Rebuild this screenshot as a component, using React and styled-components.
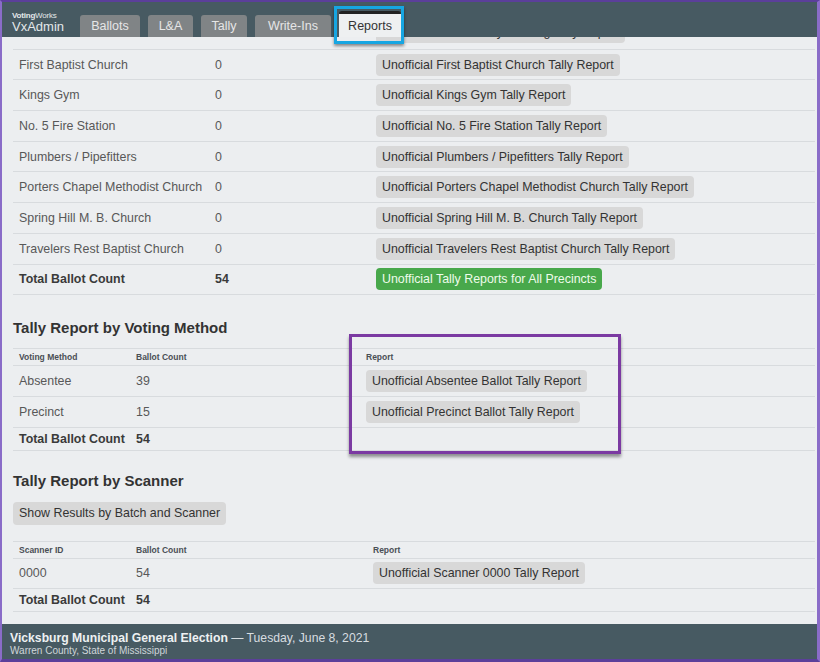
import React from "react";
import styled, { createGlobalStyle } from "styled-components";

const GlobalStyle = createGlobalStyle`
  html, body {
    margin: 0;
    padding: 0;
    height: 100%;
    overflow: hidden;
  }
  body {
    font-family: "Liberation Sans", Arial, sans-serif;
    background: #eceef0;
  }
  * { box-sizing: border-box; }
`;

const Frame = styled.div`
  height: 100vh;
  display: flex;
  flex-direction: column;
  border-style: solid;
  border-color: #8a6cc8;
  border-top-color: #5b3f9a;
  border-bottom-color: #5b3f9a;
  border-width: 2px 3px 3px 2px;
  background: #eceef0;
`;

const Header = styled.header`
  height: 35px;
  flex: none;
  display: flex;
  align-items: flex-end;
  background: #475a62;
  padding-left: 10px;
  position: relative;
  z-index: 2;
`;

const Brand = styled.div`
  align-self: center;
  color: #e4e8ea;
  width: 68px;
  margin-top: 5px;
`;

const BrandSmall = styled.div`
  font-size: 8px;
  line-height: 9px;
  letter-spacing: -0.2px;
  b { font-weight: 700; }
`;

const BrandName = styled.div`
  font-size: 13px;
  line-height: 14px;
`;

const Tabs = styled.nav`
  display: flex;
  align-items: flex-end;
  gap: 8px;
`;

const Tab = styled.div`
  position: relative;
  width: ${(p) => p.$w}px;
  height: ${(p) => (p.$active ? "26px" : "22px")};
  display: flex;
  align-items: center;
  justify-content: center;
  font-size: 12.5px;
  border-radius: 3px 3px 0 0;
  background: ${(p) => (p.$active ? "#eef0f1" : "#808486")};
  color: ${(p) => (p.$active ? "#333" : "#e6e6e6")};
  border-top: ${(p) => (p.$active ? "3px solid #222" : "none")};
`;

const TabHighlight = styled.span`
  position: absolute;
  left: -5px;
  right: -3px;
  top: -8px;
  bottom: -7px;
  border: 3px solid #16a6e2;
  box-shadow: 0 2px 3px rgba(0, 0, 0, 0.45);
  pointer-events: none;
`;

const Main = styled.main`
  flex: 1;
  overflow: hidden;
  padding: 0 2px 0 11px;
  color: #555;
`;

const Scrolled = styled.div`
  margin-top: -18px;
`;

const Grid = styled.div`
  display: grid;
  grid-template-columns: ${(p) => p.$cols};
`;

const Cell = styled.div`
  height: ${(p) => (p.$short ? "23px" : "30.7px")};
  border-bottom: 1px solid #d8dbde;
  padding-left: 6px;
  display: flex;
  align-items: ${(p) => (p.$peek ? "flex-start" : "center")};
  padding-top: ${(p) => (p.$peek ? "2px" : "0")};
  font-size: 12.4px;
  font-weight: ${(p) => (p.$bold ? 700 : 400)};
  color: ${(p) => (p.$bold ? "#3a3a3a" : "#585858")};
  white-space: nowrap;
`;

const HeadCell = styled.div`
  height: 18px;
  border-top: 1px solid #d8dbde;
  border-bottom: 1px solid #d8dbde;
  padding-left: 6px;
  display: flex;
  align-items: center;
  font-size: 8.5px;
  font-weight: 700;
  color: #4a4f55;
`;

const Button = styled.button`
  font-family: "Liberation Sans", Arial, sans-serif;
  font-size: 12.4px;
  height: 22px;
  padding: 0 6px;
  border: none;
  border-radius: 4px;
  background: ${(p) => (p.$primary ? "#48a84b" : "#d8d8d8")};
  color: ${(p) => (p.$primary ? "#eefbea" : "#333")};
  white-space: nowrap;
  cursor: pointer;
`;

const Section = styled.section`
  position: relative;
  margin-top: ${(p) => p.$top || 0}px;
`;

const Heading = styled.h2`
  margin: 0 0 11px;
  font-size: 15px;
  font-weight: 700;
  color: #333;
  line-height: 18px;
`;

const SectionButton = styled(Button)`
  height: 23px;
  margin: 1px 0 16px;
`;

const CalloutBox = styled.span`
  position: absolute;
  left: 336px;
  top: 15px;
  width: 272px;
  height: 120px;
  border: 3px solid #7b3aa2;
  box-shadow: 0 3px 3px rgba(0, 0, 0, 0.4);
  pointer-events: none;
`;

const Footer = styled.footer`
  height: 35px;
  flex: none;
  background: #475a62;
  color: #eef1f2;
  padding: 7px 8px 0;
`;

const FooterTitle = styled.div`
  font-size: 12.2px;
  line-height: 14px;
  b { font-weight: 700; }
  span { color: #d7dde0; }
`;

const FooterSub = styled.div`
  font-size: 10px;
  line-height: 12px;
  color: #cfd6d9;
`;

const precincts = [
  ["First Baptist Church", "0"],
  ["Kings Gym", "0"],
  ["No. 5 Fire Station", "0"],
  ["Plumbers / Pipefitters", "0"],
  ["Porters Chapel Methodist Church", "0"],
  ["Spring Hill M. B. Church", "0"],
  ["Travelers Rest Baptist Church", "0"],
];

const tabs = [
  ["Ballots", 60],
  ["L&A", 45],
  ["Tally", 46],
  ["Write-Ins", 76],
];

export default function App() {
  return (
    <>
      <GlobalStyle />
      <Frame>
        <Header>
          <Brand>
            <BrandSmall>
              <b>Voting</b>Works
            </BrandSmall>
            <BrandName>VxAdmin</BrandName>
          </Brand>
          <Tabs>
            {tabs.map(([label, w]) => (
              <Tab key={label} $w={w}>
                {label}
              </Tab>
            ))}
            <Tab $active $w={62}>
              Reports
              <TabHighlight />
            </Tab>
          </Tabs>
        </Header>

        <Main>
          <Scrolled>
            <Grid $cols="196px 161px 1fr">
              {/* row scrolled mostly out of view under the header */}
              <Cell $peek />
              <Cell $peek />
              <Cell $peek>
                <Button>Unofficial Fisher Ferry Building Tally Report</Button>
              </Cell>
              {precincts.map(([name, count]) => (
                <React.Fragment key={name}>
                  <Cell>{name}</Cell>
                  <Cell>{count}</Cell>
                  <Cell>
                    <Button>Unofficial {name} Tally Report</Button>
                  </Cell>
                </React.Fragment>
              ))}
              <Cell $bold>Total Ballot Count</Cell>
              <Cell $bold>54</Cell>
              <Cell>
                <Button $primary>Unofficial Tally Reports for All Precincts</Button>
              </Cell>
            </Grid>

            <Section $top={24}>
              <Heading>Tally Report by Voting Method</Heading>
              <Grid $cols="117px 230px 1fr">
                <HeadCell>Voting Method</HeadCell>
                <HeadCell>Ballot Count</HeadCell>
                <HeadCell>Report</HeadCell>
                <Cell>Absentee</Cell>
                <Cell>39</Cell>
                <Cell>
                  <Button>Unofficial Absentee Ballot Tally Report</Button>
                </Cell>
                <Cell>Precinct</Cell>
                <Cell>15</Cell>
                <Cell>
                  <Button>Unofficial Precinct Ballot Tally Report</Button>
                </Cell>
                <Cell $bold $short>Total Ballot Count</Cell>
                <Cell $bold $short>54</Cell>
                <Cell $short />
              </Grid>
              <CalloutBox />
            </Section>

            <Section $top={21}>
              <Heading>Tally Report by Scanner</Heading>
              <SectionButton>Show Results by Batch and Scanner</SectionButton>
              <Grid $cols="117px 237px 1fr">
                <HeadCell>Scanner ID</HeadCell>
                <HeadCell>Ballot Count</HeadCell>
                <HeadCell>Report</HeadCell>
                <Cell>0000</Cell>
                <Cell>54</Cell>
                <Cell>
                  <Button>Unofficial Scanner 0000 Tally Report</Button>
                </Cell>
                <Cell $bold $short>Total Ballot Count</Cell>
                <Cell $bold $short>54</Cell>
                <Cell $short />
              </Grid>
            </Section>
          </Scrolled>
        </Main>

        <Footer>
          <FooterTitle>
            <b>Vicksburg Municipal General Election</b>
            <span> — Tuesday, June 8, 2021</span>
          </FooterTitle>
          <FooterSub>Warren County, State of Mississippi</FooterSub>
        </Footer>
      </Frame>
    </>
  );
}
